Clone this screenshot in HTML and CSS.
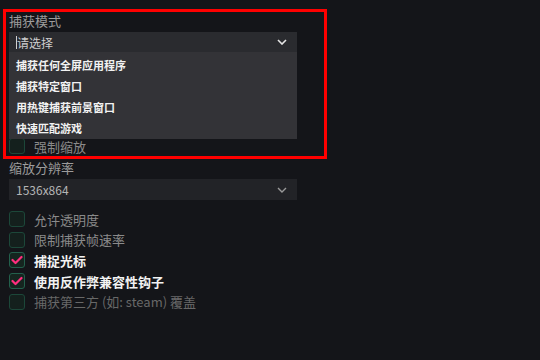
FILE: index.html
```html
<!DOCTYPE html>
<html>
<head>
<meta charset="utf-8">
<link rel="stylesheet" href="styles.css">
</head>
<body>
<section class="frame">
  <div class="label">捕获模式</div>
  <div class="select-wrap">
    <div class="select open">
      <span class="value"><span class="caret"></span>请选择</span>
      <svg class="chev" width="10" height="6" viewBox="0 0 10 6"><polyline points="1,1 5,5 9,1" fill="none" stroke="#e6e6e6" stroke-width="1.6"/></svg>
    </div>
    <ul class="menu">
      <li>捕获任何全屏应用程序</li>
      <li>捕获特定窗口</li>
      <li>用热键捕获前景窗口</li>
      <li>快速匹配游戏</li>
    </ul>
  </div>
  <div class="spacer"></div>
  <label class="row"><span class="box"></span><span class="txt">强制缩放</span></label>
</section>
<div class="rest">
  <div class="label">缩放分辨率</div>
  <div class="select dark">
    <span class="value">1536x864</span>
    <svg class="chev" width="10" height="6" viewBox="0 0 10 6"><polyline points="1,1 5,5 9,1" fill="none" stroke="#9a9a9a" stroke-width="1.4"/></svg>
  </div>
  <div class="rows">
    <label class="row"><span class="box"></span><span class="txt">允许透明度</span></label>
    <label class="row"><span class="box"></span><span class="txt">限制捕获帧速率</span></label>
    <label class="row on"><span class="box"><svg width="12" height="10" viewBox="0 0 12 10"><polyline points="1.5,5 4.5,8 10.5,2" fill="none" stroke="#ff2e7e" stroke-width="2.2" stroke-linecap="round" stroke-linejoin="round"/></svg></span><span class="txt">捕捉光标</span></label>
    <label class="row on"><span class="box"><svg width="12" height="10" viewBox="0 0 12 10"><polyline points="1.5,5 4.5,8 10.5,2" fill="none" stroke="#ff2e7e" stroke-width="2.2" stroke-linecap="round" stroke-linejoin="round"/></svg></span><span class="txt">使用反作弊兼容性钩子</span></label>
    <label class="row dim"><span class="box"></span><span class="txt">捕获第三方 (如: steam) 覆盖</span></label>
  </div>
</div>
</body>
</html>
```

FILE: styles.css
```css
* { box-sizing: border-box; }
html, body { margin: 0; padding: 0; }
body {
  background: #141519;
  width: 540px;
  height: 360px;
  overflow: hidden;
  font-family: "Noto Sans CJK SC", "Liberation Sans", sans-serif;
  color: #9a9a9a;
}
.frame {
  margin: 9px 0 0 3px;
  width: 324px;
  height: 150px;
  border: 3px solid #ff0000;
  padding: 0 0 2px 3px;
  display: flex;
  flex-direction: column;
}
.label {
  font-size: 13px;
  line-height: 17px;
  height: 17px;
  color: #9c9c9c;
  margin-bottom: 3px;
}
.select-wrap { position: relative; width: 288px; }
.select {
  width: 288px;
  height: 20px;
  background: #2a2b2f;
  display: flex;
  align-items: center;
  justify-content: space-between;
  padding: 0 10px 0 7px;
  font-size: 12px;
  color: #cfcfcf;
}
.value { display: flex; align-items: center; }
.caret {
  display: inline-block;
  width: 1px;
  height: 13px;
  background: #d0d0d0;
}
.menu {
  position: absolute;
  top: 20px;
  left: 0;
  width: 288px;
  height: 87px;
  margin: 0;
  padding: 3px 0 0 0;
  list-style: none;
  background: #333337;
  z-index: 2;
}
.menu li {
  height: 21px;
  line-height: 21px;
  padding-left: 7px;
  font-size: 11px;
  font-weight: bold;
  color: #f2f2f2;
}
.spacer { height: 86px; flex: none; }
.row {
  display: flex;
  align-items: center;
  height: 16px;
  gap: 9px;
  font-size: 13px;
  color: #8a8a8a;
}
.box {
  width: 16px;
  height: 16px;
  flex: none;
  border: 1px solid #1c4739;
  background: #14201d;
  border-radius: 3px;
  display: flex;
  align-items: center;
  justify-content: center;
}
.row.on .box { border-color: #23604c; background: #15251f; }
.row.on .txt { color: #f2f2f2; font-weight: bold; }
.row.dim .txt { color: #686868; }
.rest { padding-left: 9px; }
.rest .label { line-height: 18px; height: 18px; margin-bottom: 2px; }
.select.dark {
  height: 21px;
  background: #222327;
  color: #b5b5b5;
}
.rows {
  margin-top: 11px;
  display: flex;
  flex-direction: column;
  gap: 4.7px;
}
```
